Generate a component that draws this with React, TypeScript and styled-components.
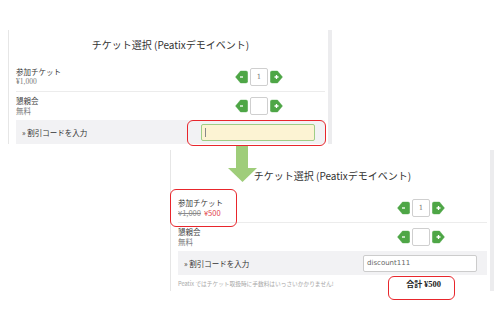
import styled, { createGlobalStyle } from "styled-components";

const GlobalStyle = createGlobalStyle`
  html, body {
    margin: 0;
    padding: 0;
    background: #ffffff;
  }
  body {
    font-family: "Noto Sans CJK JP", "Noto Sans", sans-serif;
    color: #333333;
  }
`;

const Canvas = styled.div`
  position: relative;
  width: 500px;
  height: 311px;
  overflow: hidden;
  background: #ffffff;
`;

const Shot = styled.div<{ x: number; y: number; padTop: number }>`
  position: absolute;
  left: ${(p) => p.x}px;
  top: ${(p) => p.y}px;
  width: 324px;
  box-sizing: border-box;
  padding: ${(p) => p.padTop}px 3px 0 7px;
  background: #ffffff;
  border-left: 1px solid #e6e6e6;
  border-right: 4px solid #ececee;
  display: flex;
  flex-direction: column;
`;

const Title = styled.div`
  font-size: 10px;
  line-height: 14px;
  text-align: center;
  color: #333333;
  margin-bottom: 10px;
`;

const Row = styled.div<{ divider?: boolean }>`
  display: flex;
  align-items: center;
  justify-content: space-between;
  padding: ${(p) => (p.divider ? "5px 0 4px" : "4px 0 3px")};
  border-bottom: ${(p) => (p.divider ? "1px solid #ececec" : "none")};
`;

const Label = styled.div`
  display: flex;
  flex-direction: column;
  font-size: 7.5px;
  line-height: 10px;
`;

const Name = styled.span`
  color: #3a3a3a;
`;

const Price = styled.span<{ serif?: boolean }>`
  color: #7a7a7a;
  font-family: ${(p) =>
    p.serif ? `"Liberation Serif", "Noto Sans CJK JP", serif` : "inherit"};
`;

const OldPrice = styled.span`
  color: #8a8a8a;
  text-decoration: line-through;
  margin-right: 3px;
`;

const SalePrice = styled.span`
  color: #e2434b;
`;

const Stepper = styled.div`
  display: flex;
  align-items: center;
  gap: 2px;
  margin-right: 42px;
`;

const Qty = styled.div`
  width: 18px;
  height: 18px;
  box-sizing: border-box;
  border: 1px solid #cfcfcf;
  border-radius: 2px;
  background: #ffffff;
  font-family: "DejaVu Serif", serif;
  font-size: 7px;
  color: #777777;
  display: flex;
  align-items: center;
  justify-content: center;
`;

const Discount = styled.div`
  display: flex;
  align-items: center;
  justify-content: space-between;
  height: 24px;
  margin-top: 1px;
  padding: 0 10px 0 6px;
  background: #f2f2f4;
  font-size: 7.5px;
  color: #333333;
`;

const CodeInput = styled.div<{ active?: boolean }>`
  width: 114px;
  height: 17px;
  box-sizing: border-box;
  border: 1px solid ${(p) => (p.active ? "#9fcd86" : "#cccccc")};
  border-radius: 2px;
  background: ${(p) => (p.active ? "#fcf3d3" : "#ffffff")};
  display: flex;
  align-items: center;
  padding-left: 3px;
  font-family: "DejaVu Sans", sans-serif;
  font-size: 7px;
  color: #666666;
`;

const Caret = styled.span`
  width: 1px;
  height: 9px;
  background: #888888;
`;

const Footer = styled.div`
  display: flex;
  align-items: center;
  justify-content: space-between;
  height: 16px;
  padding-right: 46px;
`;

const Note = styled.span`
  font-size: 5.7px;
  color: #a8a8a8;
`;

const Total = styled.span`
  font-family: "Noto Sans CJK JP", "Liberation Serif", serif;
  font-size: 8px;
  font-weight: bold;
  color: #222222;
`;

const TotalAmount = styled.span`
  font-family: "Liberation Serif", serif;
  font-size: 8.5px;
`;

const Highlight = styled.div<{ x: number; y: number; w: number; h: number }>`
  position: absolute;
  left: ${(p) => p.x}px;
  top: ${(p) => p.y}px;
  width: ${(p) => p.w}px;
  height: ${(p) => p.h}px;
  box-sizing: border-box;
  border: 1.5px solid #e8262c;
  border-radius: 6px;
  z-index: 3;
`;

const ArrowMark = styled.svg`
  position: absolute;
  left: 228px;
  top: 146px;
  z-index: 2;
`;

function StepButton({ dir }: { dir: "minus" | "plus" }) {
  const flip = dir === "plus";
  return (
    <svg width="13" height="14" viewBox="0 0 13 14">
      <g transform={flip ? "translate(13 0) scale(-1 1)" : undefined}>
        <path
          d="M0.5 7 L5.5 1 H11 Q12.7 1 12.7 2.8 V11.2 Q12.7 13 11 13 H5.5 Z"
          fill="#4ea646"
          stroke="#4ea646"
          strokeWidth="0.4"
          strokeLinejoin="miter"
        />
      </g>
      {flip ? (
        <path d="M4.5 7 H8.5 M6.5 5 V9" stroke="#ffffff" strokeWidth="1.3" />
      ) : (
        <path d="M5 7 H8" stroke="#ffffff" strokeWidth="1.3" />
      )}
    </svg>
  );
}

function QtyStepper({ value }: { value?: string }) {
  return (
    <Stepper>
      <StepButton dir="minus" />
      <Qty>{value}</Qty>
      <StepButton dir="plus" />
    </Stepper>
  );
}

export default function App() {
  return (
    <Canvas>
      <GlobalStyle />
      <Shot x={8} y={30} padTop={8}>
        <Title>チケット選択 (Peatixデモイベント)</Title>
        <Row divider>
          <Label>
            <Name>参加チケット</Name>
            <Price serif>¥1,000</Price>
          </Label>
          <QtyStepper value="1" />
        </Row>
        <Row>
          <Label>
            <Name>懇親会</Name>
            <Price>無料</Price>
          </Label>
          <QtyStepper />
        </Row>
        <Discount>
          <span>» 割引コードを入力</span>
          <CodeInput active>
            <Caret />
          </CodeInput>
        </Discount>
      </Shot>

      <Shot x={170} y={150} padTop={19}>
        <Title>チケット選択 (Peatixデモイベント)</Title>
        <Row divider>
          <Label>
            <Name>参加チケット</Name>
            <span>
              <OldPrice>¥1,000</OldPrice>
              <SalePrice>¥500</SalePrice>
            </span>
          </Label>
          <QtyStepper value="1" />
        </Row>
        <Row>
          <Label>
            <Name>懇親会</Name>
            <Price>無料</Price>
          </Label>
          <QtyStepper />
        </Row>
        <Discount>
          <span>» 割引コードを入力</span>
          <CodeInput>discount111</CodeInput>
        </Discount>
        <Footer>
          <Note>Peatix ではチケット取扱時に手数料はいっさいかかりません!</Note>
          <Total>
            合計 <TotalAmount>¥500</TotalAmount>
          </Total>
        </Footer>
      </Shot>

      <ArrowMark width="29" height="36" viewBox="0 0 29 36">
        <rect x="8" y="0" width="12" height="23" fill="#9fcd7a" />
        <polygon points="0,22 29,22 14.5,36" fill="#9fcd7a" />
      </ArrowMark>

      <Highlight x={187} y={120} w={139} h={26} />
      <Highlight x={170} y={189} w={67} h={38} />
      <Highlight x={388} y={276} w={67} h={24} />
    </Canvas>
  );
}
